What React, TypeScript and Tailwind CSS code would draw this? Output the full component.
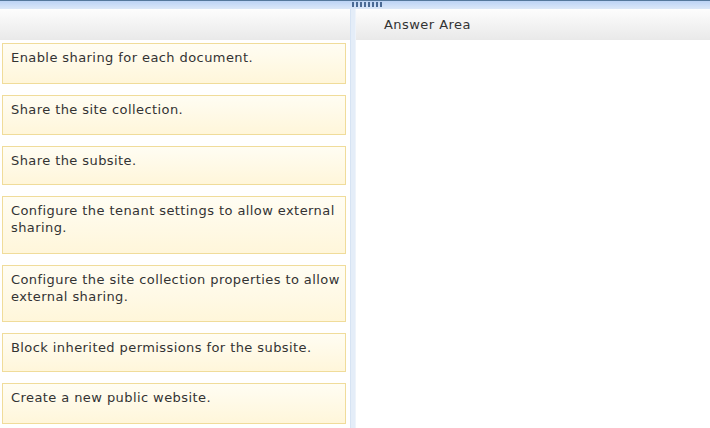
const items = [
  { text: 'Enable sharing for each document.', h: 'h-[41px]' },
  { text: 'Share the site collection.', h: 'h-[40px]' },
  { text: 'Share the subsite.', h: 'h-[39px]' },
  { text: 'Configure the tenant settings to allow external sharing.', h: 'h-[58px]' },
  { text: 'Configure the site collection properties to allow external sharing.', h: 'h-[57px]' },
  { text: 'Block inherited permissions for the subsite.', h: 'h-[39px]' },
  { text: 'Create a new public website.', h: 'h-[41px]' },
]

function Card({ text, h }: { text: string; h: string }) {
  return (
    <div
      className={`w-[344px] shrink-0 border border-[#f0dc9a] bg-gradient-to-b from-[#fffdf3] to-[#fff6da] pl-[8px] pt-[5px] text-[13px] leading-[17px] tracking-[0.42px] text-[#333333] ${h}`}
    >
      {text}
    </div>
  )
}

export default function App() {
  return (
    <div
      className="w-[710px] h-[428px] overflow-hidden bg-white flex flex-col"
      style={{ fontFamily: '"DejaVu Sans", Verdana, sans-serif' }}
    >
      {/* top splitter strip */}
      <div className="h-[9px] shrink-0 border-t border-[#55789c] bg-gradient-to-b from-[#bcd3f5] to-[#dce8f8] flex pl-[351px]">
        <div className="w-[32px] h-[5px] mt-[1px] bg-[radial-gradient(circle,#4a6a95_45%,transparent_50%)] bg-[length:4px_3px]" />
      </div>

      <div className="flex flex-1 min-h-0">
        {/* source list */}
        <div className="w-[350px] shrink-0 flex flex-col">
          <div className="h-[31px] shrink-0 bg-gradient-to-b from-[#fdfdfd] to-[#e9e9e9]" />
          <div className="flex flex-col gap-[11px] pt-[3px] pl-[2px]">
            {items.map((it) => (
              <Card key={it.text} text={it.text} h={it.h} />
            ))}
          </div>
        </div>

        {/* divider */}
        <div className="w-[6px] shrink-0 bg-[#e4edf8] border-l border-[#d6e3f3] border-r border-r-[#eef3fa]" />

        {/* answer area */}
        <div className="flex-1 flex flex-col">
          <div className="h-[31px] shrink-0 bg-gradient-to-b from-[#fdfdfd] to-[#e9e9e9] flex items-center pl-[28px] pt-[1px] text-[13px] tracking-[0.45px] text-[#333333]">
            Answer Area
          </div>
          <div className="flex-1 bg-white" />
        </div>
      </div>
    </div>
  )
}
